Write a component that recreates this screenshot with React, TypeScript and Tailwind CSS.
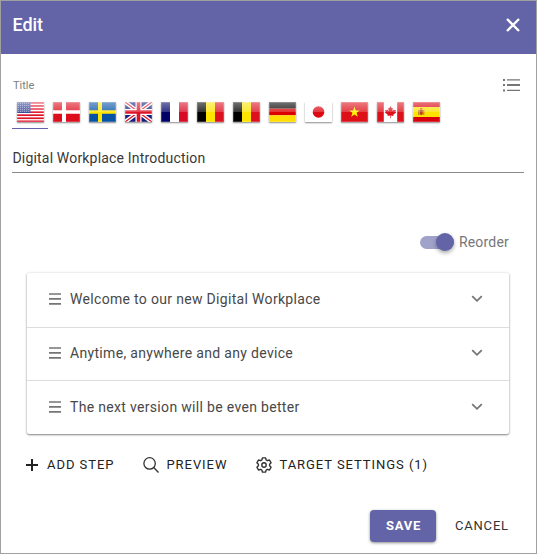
import type { ReactNode } from "react";

function Stripes({ colors, vertical = false }: { colors: string[]; vertical?: boolean }) {
  const n = colors.length;
  return (
    <>
      {colors.map((c, i) =>
        vertical ? (
          <rect key={i} x={(27 / n) * i} y="0" width={27 / n + 0.02} height="20" fill={c} />
        ) : (
          <rect key={i} x="0" y={(20 / n) * i} width="27" height={20 / n + 0.02} fill={c} />
        ),
      )}
    </>
  );
}

const flags: { name: string; art: ReactNode }[] = [
  {
    name: "United States",
    art: (
      <>
        <rect width="27" height="20" fill="#fff" />
        {[0, 1, 2, 3, 4, 5, 6].map((i) => (
          <rect key={i} y={i * 3.08} width="27" height="1.7" fill="#e0122a" />
        ))}
        <rect width="13.5" height="11" fill="#34459a" />
        {[0, 1, 2, 3, 4].map((r) =>
          [0, 1, 2, 3, 4, 5].map((c) => (
            <circle key={`${r}-${c}`} cx={1.3 + c * 2.1} cy={1.4 + r * 2.1} r="0.45" fill="#fff" />
          )),
        )}
      </>
    ),
  },
  {
    name: "Denmark",
    art: (
      <>
        <rect width="27" height="20" fill="#dd0d1c" />
        <path d="M9 0h4v20H9zM0 8.3h27v3.4H0z" fill="#fff" />
      </>
    ),
  },
  {
    name: "Sweden",
    art: (
      <>
        <rect width="27" height="20" fill="#0653a5" />
        <path d="M9 0h4v20H9zM0 8.3h27v3.4H0z" fill="#ffe600" />
      </>
    ),
  },
  {
    name: "United Kingdom",
    art: (
      <>
        <rect width="27" height="20" fill="#16207c" />
        <path d="M0 0l27 20M27 0L0 20" stroke="#fff" strokeWidth="4" />
        <path d="M0 0l27 20M27 0L0 20" stroke="#dd1428" strokeWidth="1.3" />
        <path d="M13.5 0v20M0 10h27" stroke="#fff" strokeWidth="6" />
        <path d="M13.5 0v20M0 10h27" stroke="#dd1428" strokeWidth="3.6" />
      </>
    ),
  },
  { name: "France", art: <Stripes vertical colors={["#000066", "#ffffff", "#d80a26"]} /> },
  { name: "Belgium (French)", art: <Stripes vertical colors={["#000000", "#fce300", "#dd1020"]} /> },
  { name: "Belgium (Dutch)", art: <Stripes vertical colors={["#000000", "#fce300", "#dd1020"]} /> },
  { name: "Germany", art: <Stripes colors={["#000000", "#dd0000", "#ffdd00"]} /> },
  {
    name: "Japan",
    art: (
      <>
        <rect width="27" height="20" fill="#fff" />
        <circle cx="13.5" cy="10" r="5.8" fill="#dc0812" />
      </>
    ),
  },
  {
    name: "Vietnam",
    art: (
      <>
        <rect width="27" height="20" fill="#dd1018" />
        <path d="M13.5 4.6l1.3 3.8h4l-3.2 2.4 1.2 3.9-3.3-2.3-3.3 2.3 1.2-3.9-3.2-2.4h4z" fill="#fff000" />
      </>
    ),
  },
  {
    name: "Canada",
    art: (
      <>
        <rect width="27" height="20" fill="#fff" />
        <path
          d="M0 0h6.800v20H0zM20.200 0H27v20h-6.800zM13.500 4l1.200 2.200 1.100-.5-.5 3.200 1.700-1.500.4.9 1.600-.2-.6 1.800.8.6-3 2.200.3 1.300-2.700-.4v2.600h-.6v-2.600l-2.700.4.3-1.300-3-2.200.8-.6L8 8.100l1.600.2.4-.9 1.700 1.500-.5-3.200 1.100.5z"
          fill="#dd101a"
        />
      </>
    ),
  },
  {
    name: "Spain",
    art: (
      <>
        <rect width="27" height="20" fill="#d8000c" />
        <rect y="5" width="27" height="10" fill="#fce400" />
        <path d="M5.2 8h1v5h-1zM10.3 8h1v5h-1z" fill="#a87848" />
        <path d="M6.6 8h3.2v3.4q0 1.6-1.6 1.6t-1.6-1.6zM7 6.2h2.4v1.3H7z" fill="#c0401c" />
      </>
    ),
  },
];

function Flag({ name, art }: { name: string; art: ReactNode }) {
  return (
    <svg
      viewBox="0 0 27 20"
      role="img"
      aria-label={name}
      preserveAspectRatio="none"
      className="h-5 w-[27px] shadow-[0_1px_1.5px_rgba(0,0,0,0.45)]"
    >
      <defs>
        <linearGradient id="gloss" x1="0" y1="0" x2="0" y2="1">
          <stop offset="0" stopColor="#fff" stopOpacity="0.45" />
          <stop offset="1" stopColor="#fff" stopOpacity="0.2" />
        </linearGradient>
      </defs>
      {art}
      <rect width="27" height="10" fill="url(#gloss)" />
      <rect x="0.5" y="0.5" width="26" height="19" fill="none" stroke="#fff" strokeOpacity="0.2" />
    </svg>
  );
}

function Row({ height, children }: { height: string; children: ReactNode }) {
  return (
    <div
      className={`flex ${height} items-center pr-[26px] pb-0.5 pl-[22px] text-sm tracking-[0.32px] text-[#484848]`}
    >
      <svg className="mr-[9px] h-3 w-3" viewBox="0 0 12 12">
        <path d="M0 1h12M0 5.900h12M0 10.800h12" stroke="#757575" strokeWidth="1.7" />
      </svg>
      <span className="grow">{children}</span>
      <svg className="h-2 w-3" viewBox="0 0 12 8" fill="none" stroke="#757575" strokeWidth="1.8">
        <path d="M1.200 1.200L6 5.800l4.800-4.600" />
      </svg>
    </div>
  );
}

export default function App() {
  return (
    <div className="flex h-[554px] w-[537px] flex-col border border-[#a0a0a0] bg-white font-['Roboto','Liberation_Sans',sans-serif] text-[#444]">
      <header className="flex h-[53px] shrink-0 items-center justify-between bg-[#6264a7] pr-4 pb-[5px] pl-[11.5px] text-white">
        <h1 className="text-lg font-medium tracking-[-0.1px]">Edit</h1>
        <svg className="h-3.5 w-3.5" viewBox="0 0 14 14" stroke="#fff" strokeWidth="2.3">
          <path d="M1 1l12 12M13 1L1 13" />
        </svg>
      </header>

      <div className="mt-[22px] flex h-[18px] items-center justify-between pr-4 pl-3 text-[11px] text-[#808080]">
        <span className="pt-0.5">Title</span>
        <svg className="h-3.5 w-[17px]" viewBox="0 0 17 14" fill="#757575">
          <path d="M0 1h2v2H0zM4 1.200h13v1.400H4zM0 6h2v2H0zM4 6h13v2H4zM0 11.500h2v2H0zM4 11.700h13v1.400H4z" />
        </svg>
      </div>

      <div className="ml-[11px] flex h-[35px]">
        {flags.map((f, i) => (
          <div
            key={f.name}
            className={
              i === 0
                ? "flex w-9 justify-center border-b border-[#6264a7] pt-2"
                : "flex w-9 justify-center border-b border-transparent pt-2"
            }
          >
            <Flag {...f} />
          </div>
        ))}
      </div>

      <div className="mr-3 ml-[11px] flex h-11 items-center border-b border-[#8a8a8a] pt-[15px] pl-[0.5px] text-sm tracking-[0.18px] text-[#383838]">
        Digital Workplace Introduction
      </div>

      <div className="mt-[59px] mr-[27px] flex h-5 items-center justify-end text-sm tracking-[0.2px] text-[#777]">
        <span className="mr-[5px] flex h-[13px] w-[34px] items-center justify-end rounded-full bg-[#a1a2ca]">
          <span className="h-[18px] w-[18px] shrink-0 rounded-full bg-[#6264a7] shadow-[0_2px_4px_rgba(0,0,0,0.35)]" />
        </span>
        Reorder
      </div>

      <div className="mt-[21px] mr-[27px] ml-[26px] h-[161px] divide-y divide-[#ddd] rounded-[2px] bg-white shadow-[0_1px_2px_rgba(0,0,0,0.45),0_0_3px_rgba(0,0,0,0.12)]">
        <Row height="h-[55px]">Welcome to our new Digital Workplace</Row>
        <Row height="h-[53px]">Anytime, anywhere and any device</Row>
        <Row height="h-[53px]">The next version will be even better</Row>
      </div>

      <div className="mt-[21px] ml-[25px] flex h-5 items-center text-[13px] tracking-[0.95px] text-[#222]">
        <button className="flex items-center">
          <svg className="mr-[9px] h-3 w-3" viewBox="0 0 12 12" stroke="#222" strokeWidth="2">
            <path d="M6 0v12M0 6h12" />
          </svg>
          ADD STEP
        </button>
        <button className="ml-[29px] flex items-center">
          <svg className="mr-[7px] h-4 w-4" viewBox="0 0 16 16" fill="none" stroke="#333" strokeWidth="1.3">
            <circle cx="6.6" cy="6.4" r="5.7" />
            <path d="M10.7 10.5l4.8 5" />
          </svg>
          PREVIEW
        </button>
        <button className="ml-[29px] flex items-center">
          <svg className="mr-[7px] h-4 w-4" viewBox="0 0 16 16" fill="none" stroke="#333" strokeWidth="1.4" strokeLinejoin="round">
            <path d="M6.4 .9h3.2l.5 2 1.4.8 2-.7 1.6 2.8L13.6 7.200v1.600l1.500 1.400-1.600 2.800-2-.7-1.400.8-.5 2H6.400l-.5-2-1.400-.8-2 .7L.9 10.200l1.500-1.400V7.200L.9 5.800 2.500 3l2 .7 1.400-.8z" />
            <circle cx="8" cy="8" r="2.2" />
          </svg>
          TARGET SETTINGS (1)
        </button>
      </div>

      <div className="mt-[35px] mr-[27px] flex h-8 items-center justify-end text-[13px] tracking-[0.8px]">
        <button className="mr-[19px] h-8 w-[66px] rounded-[4px] bg-[#6264a7] pl-px font-bold text-white shadow-[0_1px_3px_rgba(0,0,0,0.45)]">
          SAVE
        </button>
        <button className="w-[54px] text-left whitespace-nowrap text-[#333]">CANCEL</button>
      </div>
    </div>
  );
}
